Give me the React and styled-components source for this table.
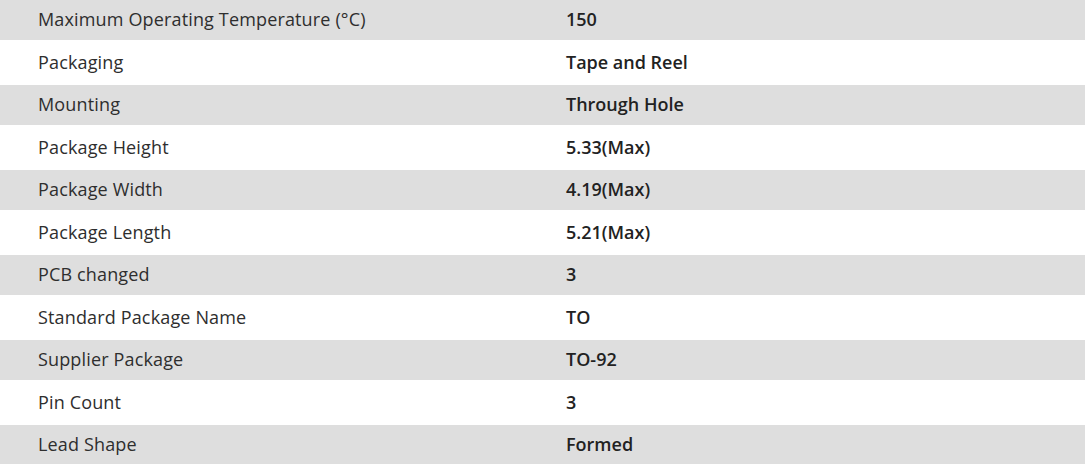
import styled, { createGlobalStyle } from "styled-components"

const GlobalStyle = createGlobalStyle`
  body {
    margin: 0;
    background: #fff;
    font-family: "Open Sans", "Liberation Sans", sans-serif;
  }
`

const specs = [
  ["Maximum Operating Temperature (°C)", "150"],
  ["Packaging", "Tape and Reel"],
  ["Mounting", "Through Hole"],
  ["Package Height", "5.33(Max)"],
  ["Package Width", "4.19(Max)"],
  ["Package Length", "5.21(Max)"],
  ["PCB changed", "3"],
  ["Standard Package Name", "TO"],
  ["Supplier Package", "TO-92"],
  ["Pin Count", "3"],
  ["Lead Shape", "Formed"],
]

export default function App() {
  return (
    <>
      <GlobalStyle />
      <Table>
        {specs.map(([label, value], index) => (
          <Row key={label} shaded={index % 2 === 0}>
            <Label>{label}</Label>
            <Value>{value}</Value>
          </Row>
        ))}
      </Table>
    </>
  )
}

const Table = styled.div`
  display: flex;
  flex-direction: column;
  width: 100%;
`

const Row = styled.div.withConfig({ shouldForwardProp: p => p !== "shaded" })`
  display: grid;
  grid-template-columns: 566px 1fr;
  align-items: center;
  height: ${props => (props.shaded ? "40px" : "45px")};
  padding-bottom: 2px;
  box-sizing: border-box;
  background-color: ${props => (props.shaded ? "#dedede" : "#fff")};
`

const Label = styled.span`
  padding-left: 38px;
  font-size: 18px;
  letter-spacing: 0.15px;
  color: #2e2e2e;
`

const Value = styled.span`
  font-size: 18px;
  font-weight: 600;
  color: #222;
`
